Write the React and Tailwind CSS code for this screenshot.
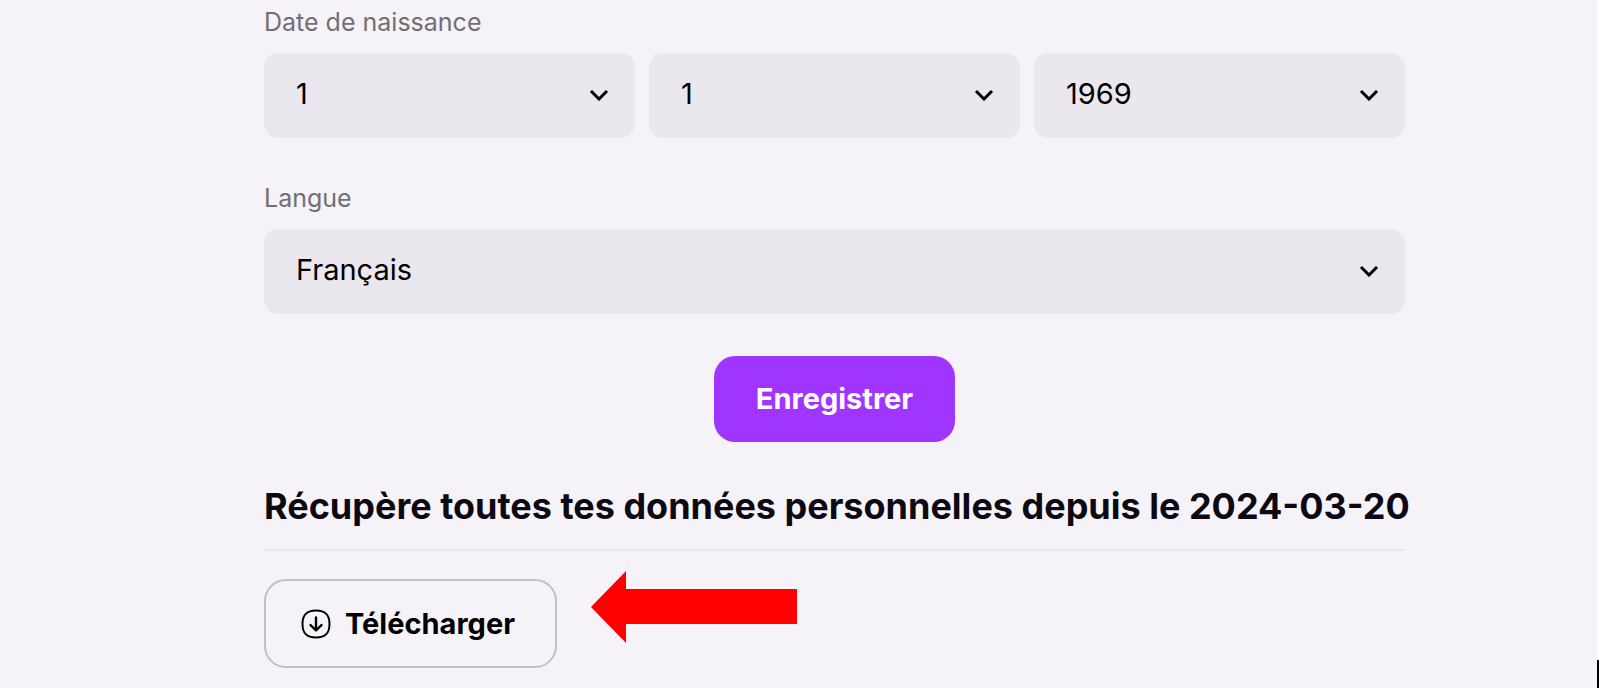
import { useState } from "react";

const days = Array.from({ length: 31 }, (_, i) => String(i + 1));
const months = Array.from({ length: 12 }, (_, i) => String(i + 1));
const years = Array.from({ length: 100 }, (_, i) => String(2024 - i));
const languages = ["Français", "English", "Deutsch", "Español"];

const Select = ({ id, label, value, options, onChange }) => (
  <div className="relative min-w-0 flex-1">
    <select
      id={id}
      aria-label={label}
      value={value}
      onChange={(e) => onChange(e.target.value)}
      className="block h-[85px] w-full appearance-none rounded-[14px] bg-[#eae7ee] pr-16 pb-1 pl-8 text-[29px] text-black"
    >
      {options.map((option) => (
        <option key={option}>{option}</option>
      ))}
    </select>
    <svg
      className="pointer-events-none absolute top-9 right-[26px]"
      width="20"
      height="12"
      viewBox="0 0 20 12"
      fill="none"
      stroke="#000"
      strokeWidth="3"
    >
      <path d="M2 2 L10 10 L18 2" />
    </svg>
  </div>
);

const DownloadIcon = () => (
  <svg
    width="30"
    height="30"
    viewBox="0 0 30 30"
    fill="none"
    stroke="#000"
    strokeWidth="2"
    strokeLinecap="round"
    strokeLinejoin="round"
  >
    <path d="M15 1.5 C24.5 1.5 28.5 5.5 28.5 15 C28.5 24.5 24.5 28.5 15 28.5 C5.5 28.5 1.5 24.5 1.5 15 C1.5 5.5 5.5 1.5 15 1.5 Z" />
    <path strokeWidth="2.4" d="M15 8.5 V21 M9.5 16 L15 21.5 L20.5 16" />
  </svg>
);

const App = () => {
  const [day, setDay] = useState("1");
  const [month, setMonth] = useState("1");
  const [year, setYear] = useState("1969");
  const [language, setLanguage] = useState("Français");

  return (
    <div className="flex min-h-screen bg-[#f5f3f8] font-['Inter',sans-serif]">
      <main className="min-w-0 flex-1 pt-1.5 pb-4 pl-[72px]">
        <div className="mx-auto max-w-[1141px]">
          <form onSubmit={(e) => e.preventDefault()}>
            {/* BIRTH DATE */}
            <label
              htmlFor="day"
              className="mb-[15px] block text-[25px] leading-8 text-[#716f76]"
            >
              Date de naissance
            </label>
            <div className="flex gap-3.5">
              <Select id="day" value={day} options={days} onChange={setDay} />
              <Select
                id="month"
                label="Mois"
                value={month}
                options={months}
                onChange={setMonth}
              />
              <Select
                id="year"
                label="Année"
                value={year}
                options={years}
                onChange={setYear}
              />
            </div>

            {/* LANGUAGE */}
            <label
              htmlFor="language"
              className="mt-11 mb-[15px] block text-[25px] leading-8 text-[#716f76]"
            >
              Langue
            </label>
            <div className="flex">
              <Select
                id="language"
                value={language}
                options={languages}
                onChange={setLanguage}
              />
            </div>

            <button
              type="submit"
              className="mx-auto mt-[42px] block h-[86px] rounded-[21px] bg-[#a035ff] px-[42px] text-[29px] font-bold text-white"
            >
              Enregistrer
            </button>
          </form>

          {/* PERSONAL DATA */}
          <h2 className="mt-[42px] border-b-2 border-[#eae7ee] pb-[21px] text-4xl leading-[44px] font-bold whitespace-nowrap text-[#0c0912]">
            Récupère toutes tes données personnelles depuis le 2024-03-20
          </h2>
          <div className="mt-7 flex items-start gap-[34px]">
            <button
              type="button"
              className="flex h-[89px] items-center gap-3.5 rounded-[22px] border-2 border-[#c1bfc5] pr-10 pl-[35px] text-[29px] font-bold text-black"
            >
              <DownloadIcon />
              Télécharger
            </button>
            <svg
              className="-mt-2"
              width="206"
              height="72"
              viewBox="0 0 206 72"
              fill="#f00"
            >
              <path d="M0 36 L35 0 V18 H206 V53 H35 V72 Z" />
            </svg>
          </div>
        </div>
      </main>
      <div className="flex w-[3px] flex-col justify-end bg-white">
        <div className="h-7 w-0.5 bg-black" />
      </div>
    </div>
  );
};

export default App;
